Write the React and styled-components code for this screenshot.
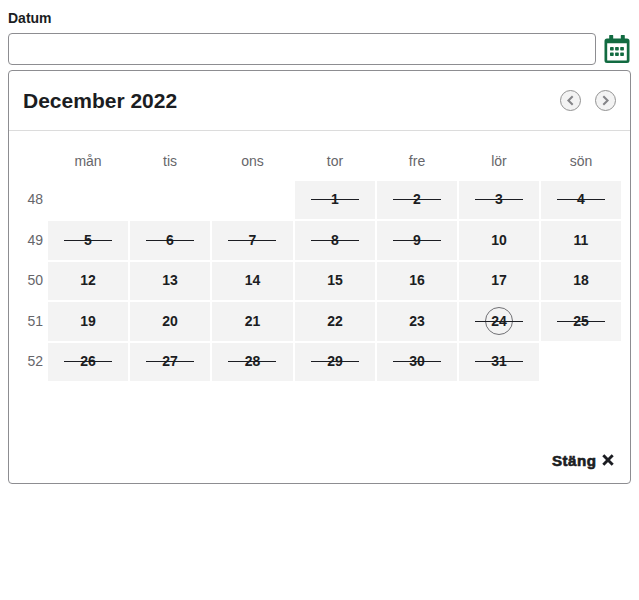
import React from "react";
import styled, { createGlobalStyle, css } from "styled-components";

const GlobalStyle = createGlobalStyle`
  * { box-sizing: border-box; }
  body {
    margin: 0;
    background: #fff;
    color: #1b1d22;
    font: 14px/16px "Liberation Sans", Arial, sans-serif;
  }
  button { font: inherit; color: inherit; cursor: pointer; }
`;

const Field = styled.div`
  width: 639px;
  padding: 10px 8px 0;
`;

const Label = styled.label`
  display: block;
  height: 23px;
  font-weight: 700;
`;

const InputRow = styled.div`
  display: flex;
  gap: 8px;
  height: 32px;
`;

const DateInput = styled.input`
  width: 588px;
  height: 32px;
  border: 1px solid #8d8d91;
  border-radius: 4px;
  outline: none;
`;

const CalendarToggle = styled.button`
  display: flex;
  width: 26px;
  height: 30px;
  padding: 1px 0 0;
  border: 0;
  background: none;
`;

const Panel = styled.section`
  display: flex;
  flex-direction: column;
  height: 414px;
  margin-top: 5px;
  border: 1px solid #8d8d91;
  border-radius: 4px;
`;

const Header = styled.header`
  display: flex;
  align-items: center;
  justify-content: space-between;
  height: 60px;
  padding: 0 14px;
  border-bottom: 1px solid #dcdcdc;
`;

const Month = styled.h2`
  margin: 0;
  font-size: 21px;
  line-height: 24px;
`;

const Navigation = styled.nav`
  display: flex;
  gap: 14px;
`;

const NavButton = styled.button`
  display: flex;
  width: 21px;
  height: 21px;
  padding: 0;
  border: 1px solid #929292;
  border-radius: 50%;
  background: #f3f3f3;
`;

const Grid = styled.div`
  display: grid;
  grid-template-columns: 37px 80px 80px 81px 80px 80px 80px 80px;
  grid-template-rows: 38px 38px 39px 38px 39px 38px;
  gap: 2px;
  padding-top: 10px;
`;

const Muted = styled.span`
  display: flex;
  align-items: center;
  justify-content: ${(p) => (p.$week ? "flex-end" : "center")};
  padding: ${(p) => (p.$week ? "0 3px 2px 0" : "2px 0 0")};
  color: #66666a;
`;

const Day = styled.div`
  position: relative;
  display: flex;
  align-items: center;
  justify-content: center;
  padding-bottom: 2px;
  background: ${(p) => (p.$empty ? "transparent" : "#f3f3f3")};
  font-weight: 700;
  ${(p) =>
    p.$disabled &&
    css`
      &::after {
        content: "";
        position: absolute;
        top: calc(50% - 1px);
        left: 16px;
        width: 48px;
        height: 1px;
        background: #1b1d22;
      }
    `}
`;

const TodayRing = styled.span`
  position: absolute;
  top: 5px;
  left: 26px;
  width: 28px;
  height: 28px;
  border: 1px solid #707074;
  border-radius: 50%;
`;

const Footer = styled.footer`
  display: flex;
  justify-content: flex-end;
  margin-top: auto;
  padding: 0 16px 14px 0;
`;

const CloseButton = styled.button`
  display: flex;
  align-items: center;
  gap: 5px;
  padding: 0;
  border: 0;
  background: none;
`;

const CloseText = styled.span`
  width: 45px;
  font-weight: 700;
  text-align: left;
  letter-spacing: 0.45px;
  transform: scaleX(1.08);
  transform-origin: left;
  -webkit-text-stroke: 0.6px #1b1d22;
`;

const CloseIcon = styled.svg`
  margin-bottom: 2px;
`;

const weekdays = ["mån", "tis", "ons", "tor", "fre", "lör", "sön"];
const weeks = [48, 49, 50, 51, 52];
const unavailable = new Set([1, 2, 3, 4, 5, 6, 7, 8, 9, 24, 25, 26, 27, 28, 29, 30, 31]);
const today = 24;

function CalendarIcon() {
  return (
    <svg width="26" height="29" viewBox="0 0 26 29" aria-hidden="true">
      <path
        fill="#126b41"
        fillRule="evenodd"
        d="M5.700 1h3a.5.5 0 0 1 .5.5v2.900h7.600V1.500a.5.5 0 0 1 .5-.5h3a.5.5 0 0 1 .5.5v2.900h2.200a2.500 2.500 0 0 1 2.500 2.500v19.600a2.500 2.500 0 0 1-2.500 2.500H3a2.500 2.500 0 0 1-2.500-2.500V6.900A2.500 2.500 0 0 1 3 4.400h2.200V1.500a.5.5 0 0 1 .5-.5ZM3.200 9.200V26a.5.5 0 0 0 .5.5h18.600a.5.5 0 0 0 .5-.5V9.200Z"
      />
      {[13, 18.4].map((y) =>
        [6, 11.1, 16.2].map((x) => (
          <rect key={`${x}-${y}`} x={x} y={y} width="3.700" height="3.500" rx=".7" fill="#126b41" />
        ))
      )}
    </svg>
  );
}

function Chevron({ d }) {
  return (
    <svg width="19" height="19" viewBox="0 0 19 19" aria-hidden="true">
      <path d={d} fill="none" stroke="#858588" strokeWidth="2" />
    </svg>
  );
}

export default function App() {
  return (
    <Field>
      <GlobalStyle />
      <Label htmlFor="date">Datum</Label>
      <InputRow>
        <DateInput id="date" />
        <CalendarToggle aria-label="Kalender"><CalendarIcon /></CalendarToggle>
      </InputRow>
      <Panel>
        <Header>
          <Month>December 2022</Month>
          <Navigation>
            <NavButton><Chevron d="M11.700 5.200 7.400 9.500l4.300 4.300" /></NavButton>
            <NavButton><Chevron d="m7.300 5.200 4.300 4.300-4.300 4.300" /></NavButton>
          </Navigation>
        </Header>
        <Grid>
          <span />
          {weekdays.map((name) => <Muted key={name}>{name}</Muted>)}
          {weeks.map((week, row) => (
            <React.Fragment key={week}>
              <Muted $week>{week}</Muted>
              {weekdays.map((name, column) => {
                const day = row * 7 + column - 2;
                const valid = day > 0 && day <= 31;
                return (
                  <Day key={name} $empty={!valid} $disabled={valid && unavailable.has(day)}>
                    {valid && day}
                    {day === today && <TodayRing />}
                  </Day>
                );
              })}
            </React.Fragment>
          ))}
        </Grid>
        <Footer>
          <CloseButton>
            <CloseText>Stäng</CloseText>
            <CloseIcon width="12" height="12" viewBox="0 0 12 12" aria-hidden="true">
              <path d="m1.300 1.300 9.400 9.400m0-9.400-9.400 9.400" stroke="#1b1d22" strokeWidth="2.900" />
            </CloseIcon>
          </CloseButton>
        </Footer>
      </Panel>
    </Field>
  );
}
